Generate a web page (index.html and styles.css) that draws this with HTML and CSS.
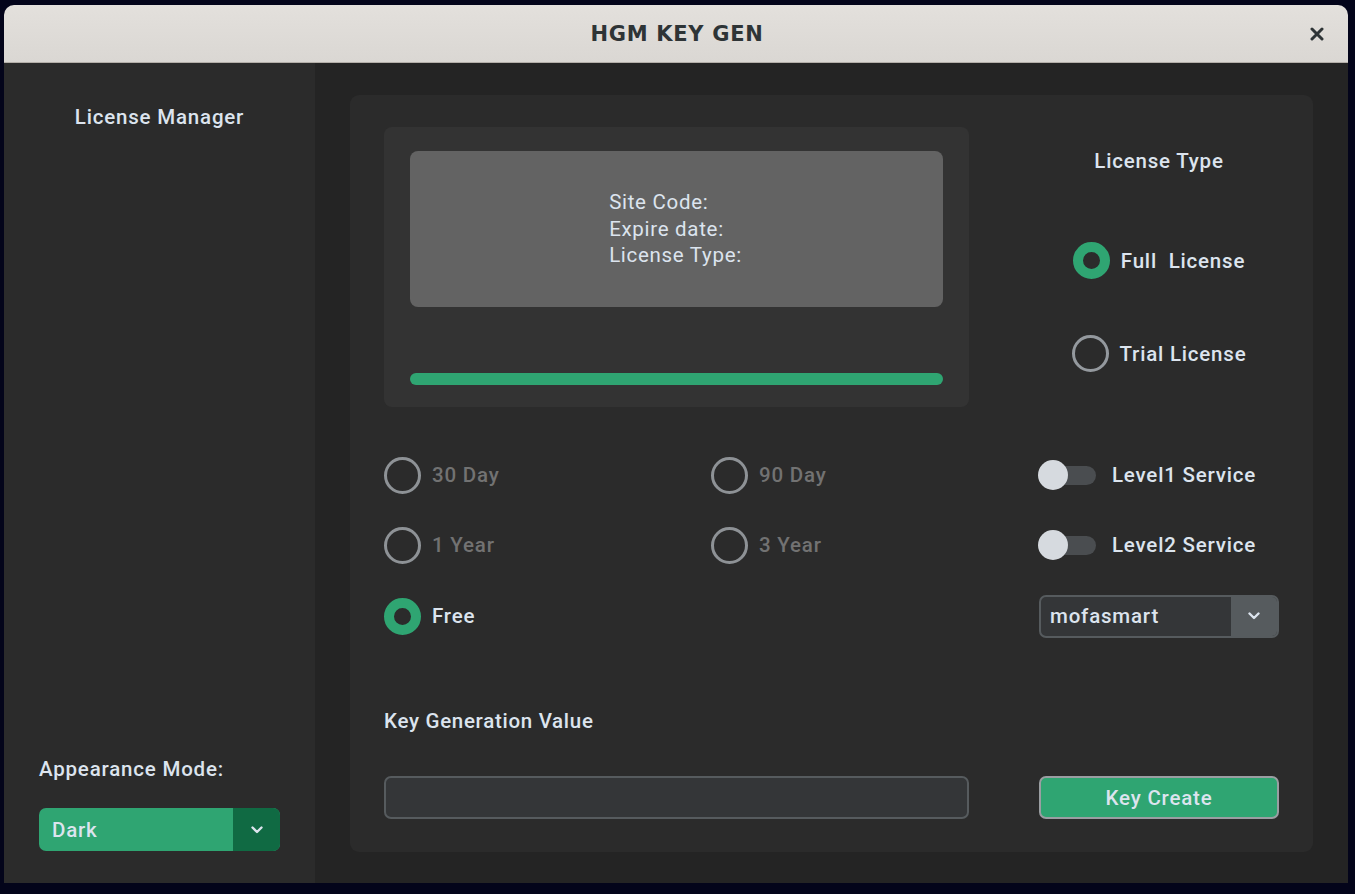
FILE: index.html
```html
<!DOCTYPE html>
<html lang="en">
<head>
<meta charset="utf-8">
<title>HGM KEY GEN</title>
<link rel="stylesheet" href="styles.css">
</head>
<body>
<div class="window">
  <header class="titlebar">
    <span class="title">HGM KEY GEN</span>
    <span class="close">
      <svg width="14" height="14" viewBox="0 0 14 14"><path d="M2 2 L12 12 M12 2 L2 12" stroke="#2e3436" stroke-width="3" stroke-linecap="round"/></svg>
    </span>
  </header>
  <div class="content">
    <aside class="sidebar">
      <div class="side-title">License Manager</div>
      <div class="side-bottom">
        <div class="side-label">Appearance Mode:</div>
        <div class="select select-green">
          <span class="select-value">Dark</span>
          <span class="select-arrow">
            <svg width="12" height="8" viewBox="0 0 12 8"><path d="M1.5 1.5 L6 6 L10.5 1.5" fill="none" stroke="#dce4ee" stroke-width="2.4" stroke-linecap="round" stroke-linejoin="round"/></svg>
          </span>
        </div>
      </div>
    </aside>
    <main class="main">
      <section class="card">
        <div class="top">
          <div class="info-frame">
            <div class="info-box">
              <div class="info-lines">
                <div>Site Code:</div>
                <div>Expire date:</div>
                <div>License Type:</div>
              </div>
            </div>
            <div class="progress"></div>
          </div>
          <div class="type-col">
            <div class="type-title">License Type</div>
            <label class="radio radio-full"><span class="dot checked"></span><span class="rlabel">Full  License</span></label>
            <label class="radio radio-trial"><span class="dot"></span><span class="rlabel">Trial License</span></label>
          </div>
        </div>
        <div class="options">
          <label class="radio disabled"><span class="dot"></span><span class="rlabel">30 Day</span></label>
          <label class="radio disabled"><span class="dot"></span><span class="rlabel">90 Day</span></label>
          <label class="switch"><span class="track"><span class="knob"></span></span><span class="rlabel">Level1 Service</span></label>
          <label class="radio disabled"><span class="dot"></span><span class="rlabel">1 Year</span></label>
          <label class="radio disabled"><span class="dot"></span><span class="rlabel">3 Year</span></label>
          <label class="switch"><span class="track"><span class="knob"></span></span><span class="rlabel">Level2 Service</span></label>
          <label class="radio"><span class="dot checked"></span><span class="rlabel">Free</span></label>
          <span class="empty"></span>
          <div class="select select-dark">
            <span class="select-value">mofasmart</span>
            <span class="select-arrow">
              <svg width="12" height="8" viewBox="0 0 12 8"><path d="M1.5 1.5 L6 6 L10.5 1.5" fill="none" stroke="#dce4ee" stroke-width="2.4" stroke-linecap="round" stroke-linejoin="round"/></svg>
            </span>
          </div>
        </div>
        <div class="key-label">Key Generation Value</div>
        <div class="bottom">
          <div class="entry"></div>
          <button class="btn">Key Create</button>
        </div>
      </section>
    </main>
  </div>
</div>
</body>
</html>
```
FILE: styles.css
```css
* { box-sizing: border-box; }
html, body { margin: 0; padding: 0; }
body {
  background: #03041a;
  width: 1355px;
  height: 894px;
  overflow: hidden;
  font-family: Roboto, "Liberation Sans", sans-serif;
  color: #dce4ee;
}
.window {
  margin: 5px 0 0 4px;
  width: 1344px;
  height: 878px;
  display: flex;
  flex-direction: column;
  border-radius: 10px 10px 0 0;
  overflow: hidden;
}
.titlebar {
  height: 58px;
  flex: none;
  background: linear-gradient(#e3e0dc, #dad7d3);
  border-bottom: 1px solid #b4afa9;
  display: flex;
  align-items: center;
  justify-content: center;
  position: relative;
}
.title {
  font-family: "DejaVu Sans", sans-serif;
  font-weight: bold;
  font-size: 21px;
  color: #2e3436;
  letter-spacing: 0.7px;
  margin-left: 2px;
}
.close {
  position: absolute;
  right: 24px;
  top: 22px;
  width: 14px;
  height: 14px;
  display: flex;
}
.content {
  flex: 1;
  display: flex;
  min-height: 0;
}
.sidebar {
  width: 311px;
  flex: none;
  background: #2b2b2b;
  display: flex;
  flex-direction: column;
  justify-content: space-between;
  padding: 43px 35px 32px 35px;
}
.side-title {
  text-align: center;
  font-size: 20.5px;
  font-weight: 500;
  line-height: 22px;
  letter-spacing: 0.8px;
}
.side-label {
  font-size: 20.5px;
  font-weight: 500;
  line-height: 22px;
  letter-spacing: 0.8px;
  margin-bottom: 28px;
}
.select {
  display: flex;
  height: 43px;
  border-radius: 7px;
  overflow: hidden;
  font-size: 20.5px;
  font-weight: 500;
  letter-spacing: 0.8px;
}
.select-green { width: 241px; background: #2fa572; }
.select-green .select-value { flex: 1; display: flex; align-items: center; padding-left: 13px; }
.select-green .select-arrow { width: 47px; background: #106a43; display: flex; align-items: center; justify-content: center; }
.select-dark { width: 240px; background: #343638; border: 2px solid #565b5e; justify-self: start; }
.select-dark .select-value { flex: 1; display: flex; align-items: center; padding-left: 9px; }
.select-dark .select-arrow { width: 46px; background: #565b5e; display: flex; align-items: center; justify-content: center; }
.main {
  flex: 1;
  background: #242424;
  padding: 32px 35px 31px 35px;
}
.card {
  height: 757px;
  background: #2b2b2b;
  border-radius: 9px;
  padding: 32px 34px 33px 34px;
  display: flex;
  flex-direction: column;
}
.top {
  display: flex;
  justify-content: space-between;
  height: 280px;
}
.info-frame {
  width: 585px;
  background: #333333;
  border-radius: 8px;
  padding: 24px 26px 22px 26px;
}
.info-box {
  height: 156px;
  background: #636363;
  border-radius: 8px;
  display: flex;
  align-items: center;
  justify-content: center;
}
.info-lines {
  font-size: 20.5px;
  line-height: 26.5px;
  letter-spacing: 0.7px;
  padding-right: 2px;
}
.progress {
  margin-top: 66px;
  height: 12px;
  border-radius: 6px;
  background: #2fa572;
}
.type-col {
  width: 240px;
  display: flex;
  flex-direction: column;
  align-items: center;
}
.type-title {
  margin-top: 23px;
  font-size: 20.5px;
  font-weight: 500;
  line-height: 22px;
  letter-spacing: 0.8px;
}
.radio-full { margin-top: 70px; }
.radio-trial { margin-top: 56px; }
.radio {
  display: flex;
  align-items: center;
  gap: 11px;
  font-size: 20.5px;
  font-weight: 500;
  letter-spacing: 0.8px;
  white-space: pre;
}
.dot {
  width: 37px;
  height: 37px;
  border-radius: 50%;
  border: 3.5px solid #94999e;
  flex: none;
}
.dot.checked { border: 10px solid #2fa572; }
.radio.disabled { color: #727272; }
.radio.disabled .dot { border-color: #8e9296; }
.options {
  margin-top: 33px;
  display: grid;
  grid-template-columns: 327px 328px 240px;
  grid-template-rows: 70px 70px 72px;
  align-items: center;
}
.switch {
  display: flex;
  align-items: center;
  gap: 16px;
  font-size: 20.5px;
  font-weight: 500;
  letter-spacing: 0.8px;
}
.track {
  width: 57px;
  height: 19px;
  border-radius: 10px;
  background: #4a4d50;
  display: flex;
  align-items: center;
}
.knob {
  width: 30px;
  height: 30px;
  border-radius: 50%;
  background: #d6dadf;
  margin-left: -1px;
}
.key-label {
  margin-top: 58px;
  font-size: 20.5px;
  font-weight: 500;
  line-height: 22px;
  letter-spacing: 0.7px;
}
.bottom {
  margin-top: 44px;
  display: flex;
  justify-content: space-between;
}
.entry {
  width: 585px;
  height: 43px;
  background: #343638;
  border: 2px solid #565b5e;
  border-radius: 7px;
}
.btn {
  width: 240px;
  height: 43px;
  background: #2fa572;
  border: 2px solid #9a9ea2;
  border-radius: 7px;
  color: #dce4ee;
  font-family: Roboto, "Liberation Sans", sans-serif;
  font-size: 20.5px;
  font-weight: 500;
  letter-spacing: 0.8px;
  padding: 0;
}
```
